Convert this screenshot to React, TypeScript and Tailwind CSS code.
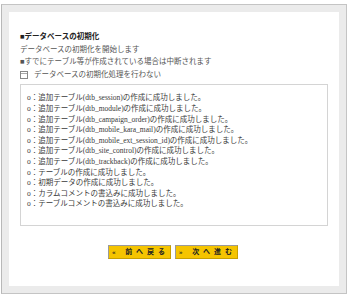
import React from "react";

const logLines = [
  "o：追加テーブル(dtb_session)の作成に成功しました。",
  "o：追加テーブル(dtb_module)の作成に成功しました。",
  "o：追加テーブル(dtb_campaign_order)の作成に成功しました。",
  "o：追加テーブル(dtb_mobile_kara_mail)の作成に成功しました。",
  "o：追加テーブル(dtb_mobile_ext_session_id)の作成に成功しました。",
  "o：追加テーブル(dtb_site_control)の作成に成功しました。",
  "o：追加テーブル(dtb_trackback)の作成に成功しました。",
  "o：テーブルの作成に成功しました。",
  "o：初期データの作成に成功しました。",
  "o：カラムコメントの書込みに成功しました。",
  "o：テーブルコメントの書込みに成功しました。",
];

const NavButton = ({ text }: { text: string }) => (
  <button
    type="button"
    className="flex h-[14px] w-[63px] items-center justify-center border border-[#9a9a9a] border-b-[#c8a000] border-r-[#c8a000] bg-[#f5c400] pl-[3px] text-[7px] font-bold leading-none tracking-[4px] text-[#222]"
  >
    {text}
  </button>
);

export default function App() {
  return (
    <div
      className="h-[298px] w-[350px] bg-white pl-[1px] pt-[4px]"
      style={{ fontFamily: '"Liberation Serif", "Noto Sans CJK JP", serif' }}
    >
      <div className="h-[290px] w-[346px] border border-[#c4c4c4] border-l-[#b8b8b8] bg-[#ebebeb] p-[7px]">
        <div className="flex h-full w-full flex-col bg-white pl-[11px] pr-[10px] pt-[19px]">
          <div className="text-[7.5px] leading-[12.6px] text-[#555]">
            <p className="font-bold text-[#222]">■データベースの初期化</p>
            <p>データベースの初期化を開始します</p>
            <p>■すでにテーブル等が作成されている場合は中断されます</p>
            <label className="flex items-center gap-[6px]">
              <span className="relative inline-block h-[8px] w-[8px] border border-[#888] bg-white">
                <span className="absolute left-0 right-0 top-[1px] h-px bg-[#aaa]" />
              </span>
              <span>データベースの初期化処理を行わない</span>
            </label>
          </div>
          <div className="mt-[3px] h-[142px] w-[308px] border border-[#d4d4d4] pl-[6px] pt-[8px] text-[7.5px] leading-[10.6px] text-[#3a3a3a]">
            {logLines.map((line, i) => (
              <p key={i} className="whitespace-nowrap">
                {line}
              </p>
            ))}
          </div>
          <div className="mt-[19px] flex justify-center gap-[4px] pr-[4px]">
            <NavButton text="« 前へ戻る" />
            <NavButton text="» 次へ進む" />
          </div>
        </div>
      </div>
    </div>
  );
}
